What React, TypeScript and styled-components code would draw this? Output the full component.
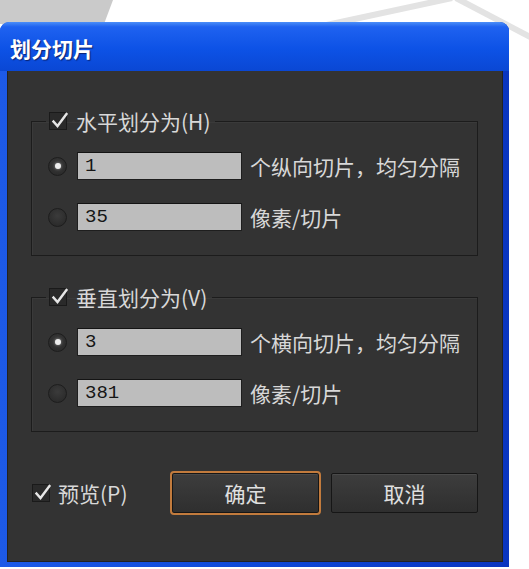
import { createGlobalStyle, styled } from 'styled-components';

const GlobalStyle = createGlobalStyle`
  html, body {
    margin: 0;
    background: #fff;
  }
  body {
    font-family: 'Noto Sans CJK SC', 'Noto Sans', sans-serif;
  }
`;

interface Slice {
  label: string;
  rows: { value: string; text: string; selected: boolean }[];
}

const groups: Slice[] = [
  {
    label: '水平划分为(H)',
    rows: [
      { value: '1', text: '个纵向切片，均匀分隔', selected: true },
      { value: '35', text: '像素/切片', selected: false },
    ],
  },
  {
    label: '垂直划分为(V)',
    rows: [
      { value: '3', text: '个横向切片，均匀分隔', selected: true },
      { value: '381', text: '像素/切片', selected: false },
    ],
  },
];

const Check = () => (
  <CheckBox>
    <svg width="18" height="18" viewBox="0 0 18 18" aria-hidden>
      <path d="M3.5 9.5 L7.5 14 L16.5 2" fill="none" stroke="#e6e6e6" strokeWidth="2.4" strokeLinecap="square" />
    </svg>
  </CheckBox>
);

const App = () => {
  return (
    <Page>
      <GlobalStyle />
      <Backdrop width="529" height="60" viewBox="0 0 529 60" aria-hidden>
        <polygon points="0,0 113,0 104,24 0,24" fill="#cacaca" />
        <path d="M322 26 L452 -2" stroke="#e3e3e3" strokeWidth="6" />
        <path d="M456 -2 L532 38" stroke="#e3e3e3" strokeWidth="6" />
      </Backdrop>

      <Dialog>
        <TitleBar>划分切片</TitleBar>
        <Body>
          {groups.map((group) => (
            <Group key={group.label}>
              <Legend>
                <Check />
                <span>{group.label}</span>
              </Legend>
              {group.rows.map((row) => (
                <Row key={row.value}>
                  <Radio $selected={row.selected} />
                  <Field defaultValue={row.value} />
                  <RowText>{row.text}</RowText>
                </Row>
              ))}
            </Group>
          ))}

          <Footer>
            <Preview>
              <Check />
              <span>预览(P)</span>
            </Preview>
            <Buttons>
              <Button $primary>确定</Button>
              <Button>取消</Button>
            </Buttons>
          </Footer>
        </Body>
      </Dialog>
    </Page>
  );
};

const Page = styled.div`
  position: relative;
  width: 529px;
  height: 569px;
  padding-top: 22px;
  box-sizing: border-box;
  overflow: hidden;
`;

const Backdrop = styled.svg`
  position: absolute;
  top: 0;
  left: 0;
`;

const Dialog = styled.div`
  position: relative;
  width: 509px;
  height: 545px;
  display: flex;
  flex-direction: column;
  border-radius: 9px 9px 0 0;
  overflow: hidden;
  background: linear-gradient(90deg, #1d5ae8 0, #0f49d8 50%, #0a35c0 100%);
`;

const TitleBar = styled.div`
  height: 49px;
  flex-shrink: 0;
  display: flex;
  align-items: center;
  padding: 2px 0 0 10px;
  box-sizing: border-box;
  background: linear-gradient(#4b8ef8 0, #1f62f0 10%, #0d52e6 55%, #0a47d4 100%);
  color: #fff;
  font-size: 21px;
  font-weight: 700;
  text-shadow: 1px 1px 1px #0a2370;
`;

const Body = styled.div`
  flex: 1;
  margin: 0 6px 5px 7px;
  padding: 39px 25px 0 24px;
  background: #333;
  box-shadow: inset 1px 0 0 #222, inset -1px 0 0 #222, inset 0 -1px 0 #222;
  display: flex;
  flex-direction: column;
  gap: 30px;
`;

const Group = styled.fieldset`
  margin: 0;
  padding: 20px 0 24px 0;
  border: 1px solid #1c1c1c;
  box-shadow: inset 1px 1px 0 #3a3a3a;
  display: flex;
  flex-direction: column;
  gap: 23px;
`;

const Legend = styled.legend`
  margin-left: 14px;
  padding: 0 5px 0 3px;
  display: flex;
  align-items: center;
  gap: 9px;
  height: 22px;
  color: #d8d8d8;
  font-size: 21px;
  line-height: 22px;
`;

const CheckBox = styled.span`
  width: 18px;
  height: 18px;
  box-sizing: border-box;
  border: 1px solid #1a1a1a;
  background: #2a2a2a;
  display: flex;
  align-items: center;
  justify-content: center;
  flex-shrink: 0;

  & > svg {
    margin: -1px -2px 0 0;
  }
`;

const Row = styled.div`
  display: flex;
  align-items: center;
  height: 28px;
  padding-left: 16px;
`;

const Radio = styled.span<{ $selected?: boolean }>`
  position: relative;
  width: 19px;
  height: 19px;
  box-sizing: border-box;
  border-radius: 50%;
  border: 1px solid #1d1d1d;
  background: radial-gradient(circle at 50% 40%, #3b3b3b, #262626);
  margin-right: 10px;
  flex-shrink: 0;

  &::after {
    content: '';
    display: ${({ $selected }) => ($selected ? 'block' : 'none')};
    position: absolute;
    top: 50%;
    left: 50%;
    width: 6px;
    height: 6px;
    margin: -3px 0 0 -3px;
    border-radius: 50%;
    background: #eee;
    box-shadow: 0 0 3px #999;
  }
`;

const Field = styled.input`
  width: 165px;
  height: 28px;
  box-sizing: border-box;
  padding: 0 0 0 7px;
  border: 1px solid #1e1e1e;
  border-top-color: #141414;
  background: #bdbdbd;
  color: #151515;
  font-family: 'Liberation Mono', monospace;
  font-size: 19px;
  outline: none;
`;

const RowText = styled.span`
  margin-left: 8px;
  color: #d8d8d8;
  font-size: 21px;
  line-height: 28px;
  white-space: nowrap;
`;

const Footer = styled.div`
  display: flex;
  align-items: center;
  margin-top: 11px;
`;

const Preview = styled.label`
  display: flex;
  align-items: center;
  gap: 8px;
  margin: 0 0 0 1px;
  color: #d8d8d8;
  font-size: 21px;
`;

const Buttons = styled.div`
  margin-left: auto;
  display: flex;
  gap: 12px;
`;

const Button = styled.button<{ $primary?: boolean }>`
  width: 147px;
  height: 40px;
  border: 1px solid #161616;
  border-radius: 2px;
  background: linear-gradient(#3d3d3d, #2f2f2f);
  box-shadow: inset 0 1px 0 #4a4a4a;
  color: #e0e0e0;
  font-family: 'Noto Sans CJK SC', sans-serif;
  font-size: 21px;
  padding: 0;
  outline: ${({ $primary }) => ($primary ? '2px solid #c27b3d' : 'none')};
  outline-offset: 0;
`;

export default App;
